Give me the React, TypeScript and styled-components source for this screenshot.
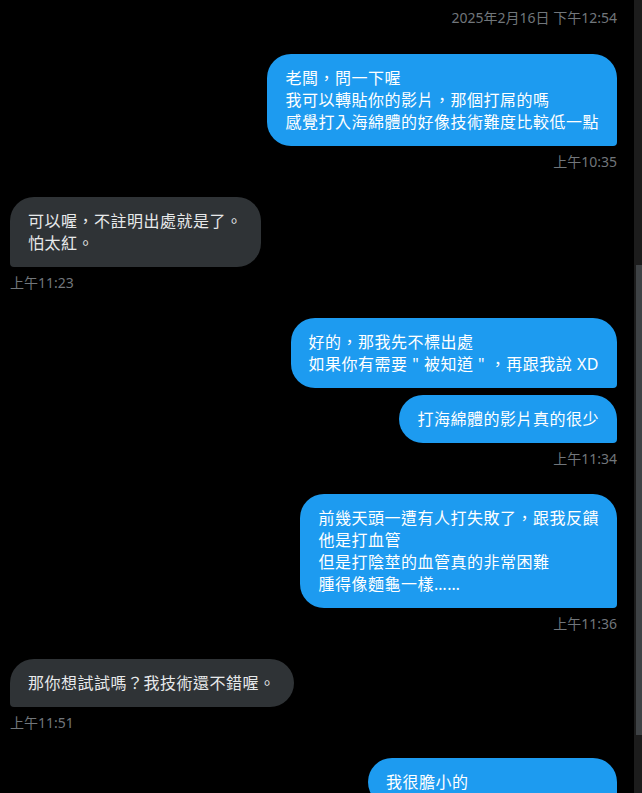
import React from 'react';
import styled, { createGlobalStyle } from 'styled-components';

type Side = 'in' | 'out';

const GlobalStyle = createGlobalStyle`
  html, body {
    margin: 0;
    padding: 0;
    background: #000;
  }
  body {
    font-family: "Noto Sans", "Noto Sans CJK TC", sans-serif;
  }
`;

const Screen = styled.div`
  display: flex;
  height: 100vh;
  overflow: hidden;
  background: #000;
`;

const Conversation = styled.div`
  flex: 1;
  display: flex;
  flex-direction: column;
  padding: 10px 17px 0 10px;
  min-width: 0;
`;

const DateStamp = styled.div`
  align-self: flex-end;
  color: #71767b;
  font-size: 14px;
  line-height: 16px;
  margin-bottom: 28px;
`;

const Group = styled.div<{ $side: Side }>`
  display: flex;
  flex-direction: column;
  align-items: ${ p => p.$side === 'out' ? 'flex-end' : 'flex-start' };
  gap: 7px;
  margin-bottom: 27px;
`;

const Bubble = styled.div<{ $side: Side; $minWidth?: number }>`
  max-width: 80%;
  min-width: ${ p => p.$minWidth ? `${ p.$minWidth }px` : '0' };
  box-sizing: border-box;
  padding: 13px 18px;
  border-radius: ${ p => p.$side === 'out' ? '24px 24px 4px 24px' : '24px 24px 24px 4px' };
  background: ${ p => p.$side === 'out' ? '#1d9bf0' : '#2f3336' };
  color: ${ p => p.$side === 'out' ? '#ffffff' : '#e7e9ea' };
  font-family: "Noto Sans", "Noto Sans CJK TC", sans-serif;
  font-size: 16px;
  line-height: 22px;
  letter-spacing: 0.5px;
  white-space: pre-wrap;
`;

const Time = styled.div`
  color: #71767b;
  font-size: 14px;
  line-height: 17px;
`;

const Track = styled.div`
  flex: 0 0 8px;
  background: #1c1c1c;
  padding-top: 265px;
  box-sizing: border-box;
`;

const Thumb = styled.div`
  margin-left: 2px;
  width: 6px;
  height: 470px;
  background: #3e4245;
`;

type Message = { text: string; minWidth?: number };
type Thread = { side: Side; time?: string; messages: Message[] };

const threads: Thread[] = [
  {
    side: 'out',
    time: '上午10:35',
    messages: [
      { text: '老闆，問一下喔\n我可以轉貼你的影片，那個打屌的嗎\n感覺打入海綿體的好像技術難度比較低一點' }
    ]
  },
  {
    side: 'in',
    time: '上午11:23',
    messages: [
      { text: '可以喔，不註明出處就是了。\n怕太紅。' }
    ]
  },
  {
    side: 'out',
    time: '上午11:34',
    messages: [
      { text: '好的，那我先不標出處\n如果你有需要 " 被知道 " ，再跟我說 XD' },
      { text: '打海綿體的影片真的很少' }
    ]
  },
  {
    side: 'out',
    time: '上午11:36',
    messages: [
      { text: '前幾天頭一遭有人打失敗了，跟我反饋\n他是打血管\n但是打陰莖的血管真的非常困難\n腫得像麵龜一樣……' }
    ]
  },
  {
    side: 'in',
    time: '上午11:51',
    messages: [
      { text: '那你想試試嗎？我技術還不錯喔。' }
    ]
  },
  {
    side: 'out',
    messages: [
      { text: '我很膽小的', minWidth: 249 }
    ]
  }
];

export default function App() {
  return (
    <>
      <GlobalStyle />
      <Screen>
        <Conversation>
          <DateStamp>2025年2月16日 下午12:54</DateStamp>
          {
            threads.map((thread, i) =>
              <Group $side={ thread.side } key={ i }>
                {
                  thread.messages.map((m, j) =>
                    <Bubble $side={ thread.side } $minWidth={ m.minWidth } key={ j }>{ m.text }</Bubble>
                  )
                }
                { thread.time && <Time>{ thread.time }</Time> }
              </Group>
            )
          }
        </Conversation>
        <Track>
          <Thumb />
        </Track>
      </Screen>
    </>
  );
}
